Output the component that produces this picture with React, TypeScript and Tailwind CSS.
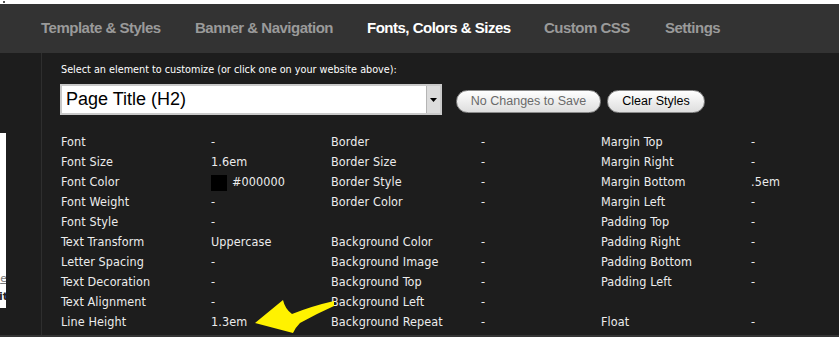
import React from 'react';

const tabs = [
  { label: 'Template & Styles', w: 'w-[154px]', active: false },
  { label: 'Banner & Navigation', w: 'w-[172px]', active: false },
  { label: 'Fonts, Colors & Sizes', w: 'w-[177px]', active: true },
  { label: 'Custom CSS', w: 'w-[121px]', active: false },
  { label: 'Settings', w: 'w-[100px]', active: false },
];

type Cell = { label: string; value?: React.ReactNode };

// each row: [col1, col2, col3]
const rows: (Cell | null)[][] = [
  [{ label: 'Font', value: '-' }, { label: 'Border', value: '-' }, { label: 'Margin Top', value: '-' }],
  [{ label: 'Font Size', value: '1.6em' }, { label: 'Border Size', value: '-' }, { label: 'Margin Right', value: '-' }],
  [{ label: 'Font Color', value: 'swatch' }, { label: 'Border Style', value: '-' }, { label: 'Margin Bottom', value: '.5em' }],
  [{ label: 'Font Weight', value: '-' }, { label: 'Border Color', value: '-' }, { label: 'Margin Left', value: '-' }],
  [{ label: 'Font Style', value: '-' }, null, { label: 'Padding Top', value: '-' }],
  [{ label: 'Text Transform', value: 'Uppercase' }, { label: 'Background Color', value: '-' }, { label: 'Padding Right', value: '-' }],
  [{ label: 'Letter Spacing', value: '-' }, { label: 'Background Image', value: '-' }, { label: 'Padding Bottom', value: '-' }],
  [{ label: 'Text Decoration', value: '-' }, { label: 'Background Top', value: '-' }, { label: 'Padding Left', value: '-' }],
  [{ label: 'Text Alignment', value: '-' }, { label: 'Background Left', value: '-' }, null],
  [{ label: 'Line Height', value: '1.3em' }, { label: 'Background Repeat', value: '-' }, { label: 'Float', value: '-' }],
];

const Value: React.FC<{ v?: React.ReactNode }> = ({ v }) => {
  if (v === 'swatch') {
    return (
      <span className="flex items-center gap-[5px]">
        <span className="w-4 h-4 bg-black mt-[2px]" />
        #000000
      </span>
    );
  }
  return <span>{v}</span>;
};

export default function App() {
  return (
    <div className="relative w-[839px] h-[337px] overflow-hidden bg-[#1d1d1d] flex flex-col">
      {/* white strip of the website above */}
      <div className="h-1 bg-white flex items-center pl-[3px]">
        <span className="w-[2px] h-[2px] bg-[#555]" />
      </div>

      {/* Tabs */}
      <nav className="h-[49px] bg-[#333333] flex items-center pl-[41px] font-['Liberation_Sans',Arial,sans-serif] font-bold text-[15px] tracking-[-0.5px]">
        {tabs.map(t => (
          <span key={t.label} className={`${t.w} shrink-0 ${t.active ? 'text-white' : 'text-[#9a9a9a]'}`}>
            {t.label}
          </span>
        ))}
      </nav>

      <div className="flex flex-1 border-b-2 border-[#343434]">
        {/* site preview edge */}
        <aside className="w-[42px] shrink-0 border-r border-[#2e2e2e] pt-[80px]">
          <div className="w-[6px] h-[175px] bg-white overflow-hidden flex flex-col items-end justify-end pb-[2px] text-[11px] leading-[18px] font-['DejaVu_Sans',sans-serif]">
            <span className="text-[#777] underline -mr-[1px]">e</span>
            <span className="text-[#222] font-bold -mr-[2px]">it</span>
          </div>
        </aside>

        {/* Editor panel */}
        <main className="flex-1 pl-[18px] pt-[10px] text-[#ececec] font-['DejaVu_Sans_Condensed','DejaVu_Sans',sans-serif]">
          <div className="text-[10.75px] leading-[14px] text-white pl-[1px]">
            Select an element to customize (or click one on your website above):
          </div>

          <div className="flex items-start mt-[7px]">
            <div className="w-[382px] h-[31px] border-2 border-[#c9c9c9] bg-white flex items-center">
              <span className="flex-1 pl-[4px] text-black text-[18px] font-['Liberation_Sans',Arial,sans-serif]">
                Page Title (H2)
              </span>
              <span className="w-[14px] h-[27px] bg-[#dcdcdc] border-l border-[#b5b5b5] flex items-center justify-center">
                <svg width="7" height="4" viewBox="0 0 7 4">
                  <polygon points="0,0 7,0 3.5,4" fill="#000" />
                </svg>
              </span>
            </div>

            <button className="ml-[14px] mt-[6px] w-[145px] h-[23px] rounded-full border border-[#8a8a8a] bg-gradient-to-b from-white to-[#dedede] text-[#6a6a6a] text-[12.5px] font-['Liberation_Sans',Arial,sans-serif]">
              No Changes to Save
            </button>
            <button className="ml-[6px] mt-[6px] w-[98px] h-[23px] rounded-full border border-[#8a8a8a] bg-gradient-to-b from-white to-[#dedede] text-black text-[12.5px] font-['Liberation_Sans',Arial,sans-serif]">
              Clear Styles
            </button>
          </div>

          <div className="mt-[17px] pl-[1px] grid grid-cols-[150px_120px_150px_120px_150px_80px] text-[12.5px] tracking-[0.1px]">
            {rows.map((r, i) =>
              r.map((c, j) => (
                <React.Fragment key={`${i}-${j}`}>
                  <div className="h-5 flex items-center">{c?.label}</div>
                  <div className="h-5 flex items-center">{c && <Value v={c.value} />}</div>
                </React.Fragment>
              ))
            )}
          </div>
        </main>
      </div>

      {/* yellow callout arrow */}
      <svg className="absolute left-[250px] top-[295px]" width="90" height="42" viewBox="250 295 90 42">
        <path
          d="M255,323 L283,300 Q285,309 292,314 Q312,306 334,301 L334,306 Q316,314 300,323 Q295,328 293,333 Z"
          fill="#fff200"
        />
      </svg>
    </div>
  );
}
